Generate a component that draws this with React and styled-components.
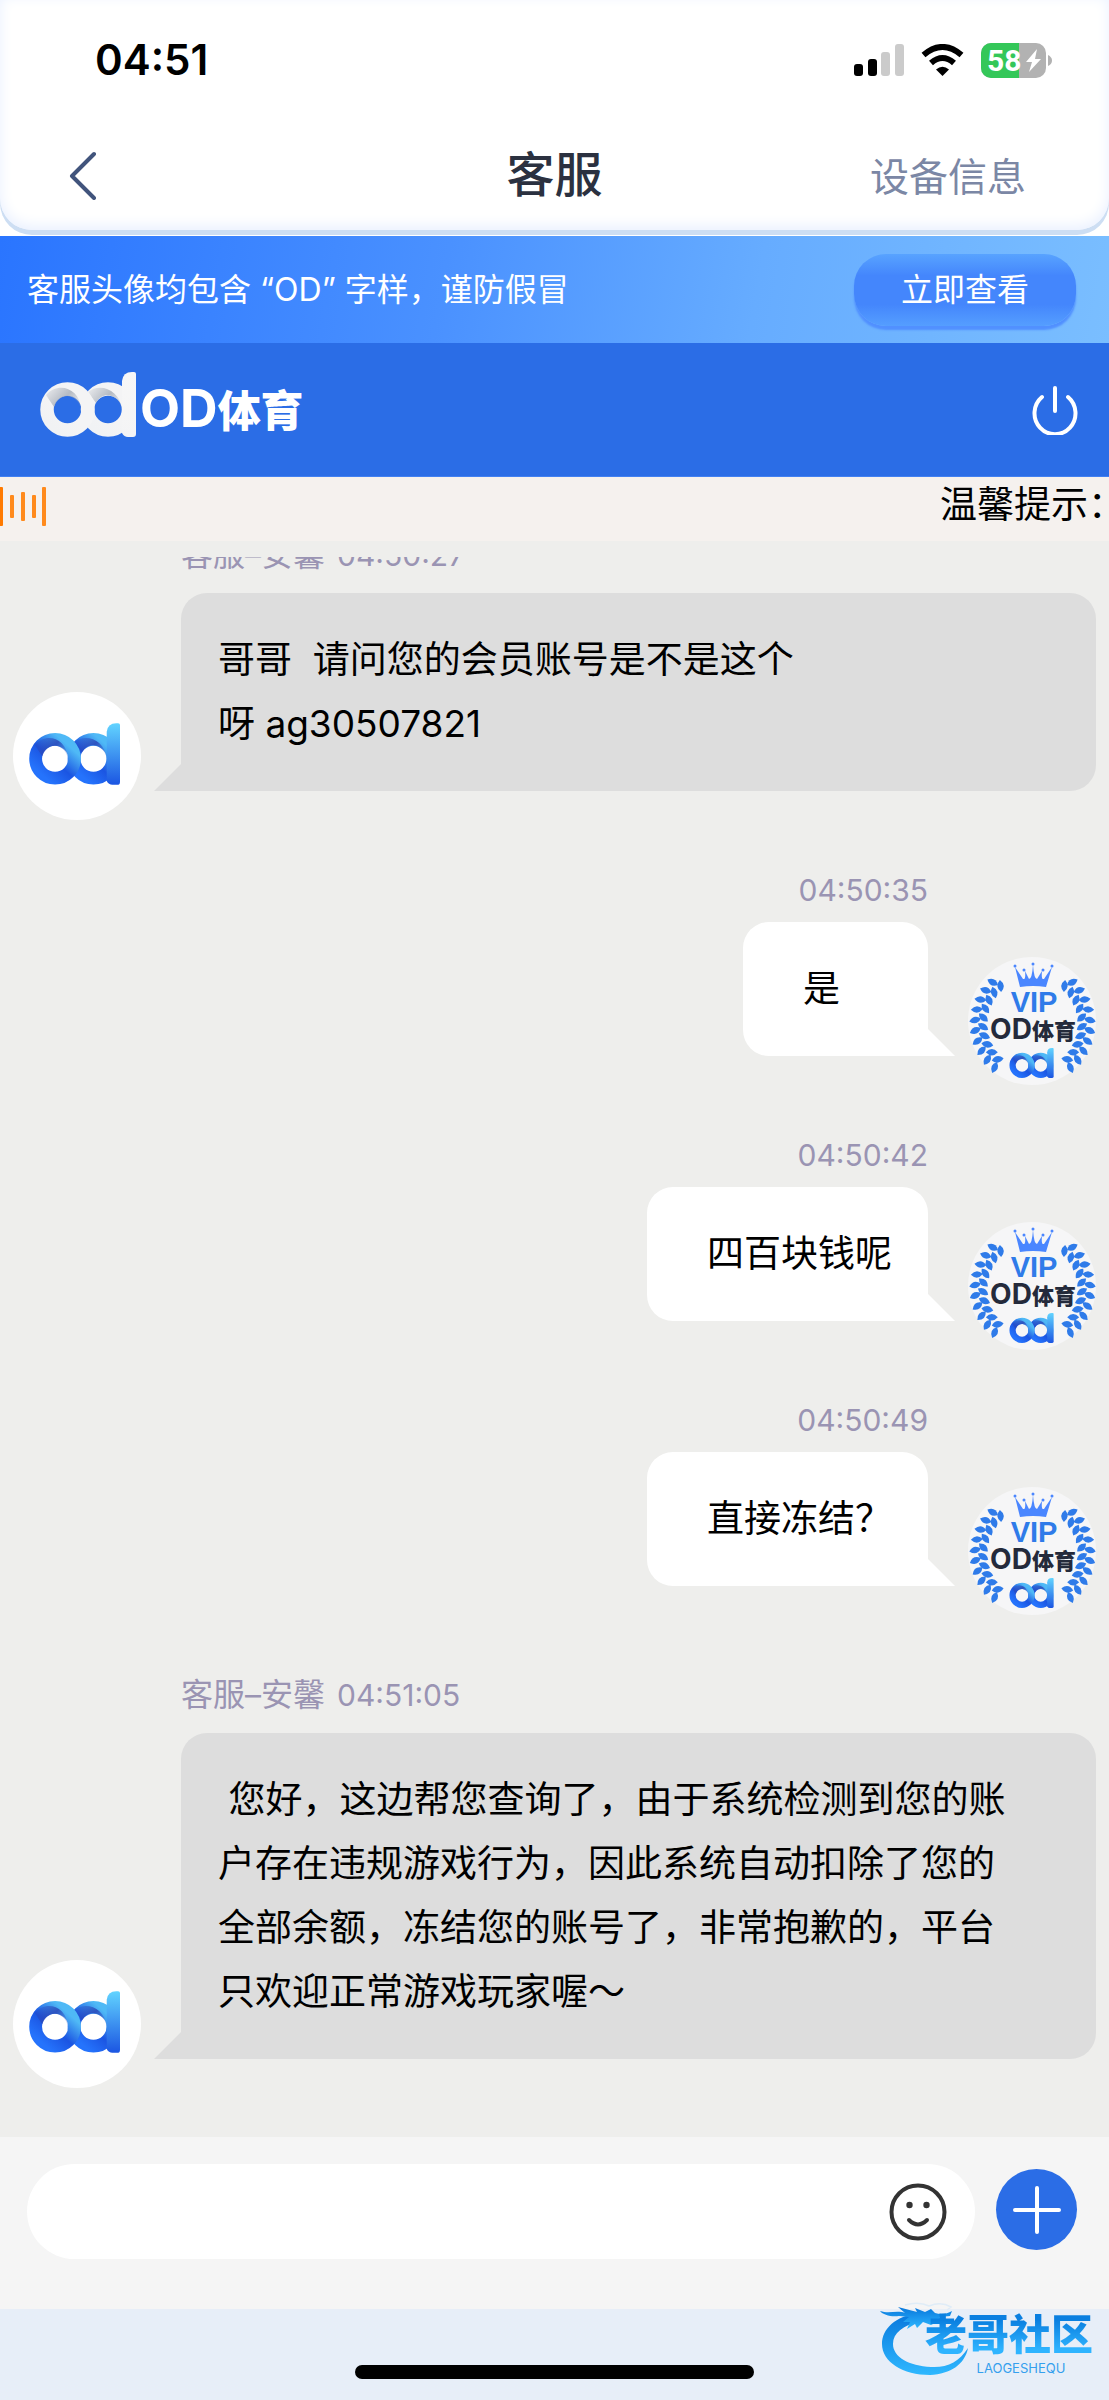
import React from "react";
import styled, { createGlobalStyle } from "styled-components";

const GlobalStyle = createGlobalStyle`
  * { box-sizing: border-box; }
  body {
    margin: 0;
    background: #fff;
    font-family: Inter, "Noto Sans CJK SC", sans-serif;
    color: #000;
  }
  button, input { font: inherit; }
  h1, h2, p { margin: 0; }
`;

const Screen = styled.div`
  display: flex;
  flex-direction: column;
  height: 100vh;
`;

const TopCard = styled.header`
  margin-bottom: 6px;
  background: #fff;
  border-radius: 0 0 32px 32px;
  box-shadow: 0 5px 0 #cddef3, inset 0 -4px 14px #e9f0ff;
`;

const StatusBar = styled.div`
  display: flex;
  align-items: center;
  justify-content: space-between;
  height: 120px;
  padding: 0 57px 0 95px;
`;

const Clock = styled.time`
  font-size: 42px;
  font-weight: 600;
  line-height: 48px;
`;

const StatusIcons = styled.div`
  display: flex;
  align-items: center;
  gap: 17px;
`;

const NavBar = styled.nav`
  display: grid;
  grid-template-columns: 1fr auto 1fr;
  align-items: center;
  height: 110px;
  padding: 0 68px;
`;

const PlainButton = styled.button`
  display: flex;
  padding: 0;
  border: 0;
  background: none;
  cursor: pointer;
`;

const Title = styled.h1`
  font-size: 48px;
  font-weight: 500;
  line-height: 64px;
  color: #2b3140;
`;

const DeviceLink = styled.a`
  justify-self: end;
  padding: 4px 15px 0 0;
  font-size: 39px;
  line-height: 56px;
  color: #7b87a5;
  text-decoration: none;
`;

const Banner = styled.section`
  display: flex;
  align-items: center;
  justify-content: space-between;
  height: 107px;
  padding: 0 33px 0 27px;
  background: linear-gradient(100deg, #2a75ff 0%, #4a91ff 40%, #66acff 68%, #7abeff 100%);
  color: #fff;
`;

const BannerText = styled.p`
  font-size: 32px;
  line-height: 48px;
`;

const BannerButton = styled.button`
  width: 222px;
  height: 72px;
  padding: 0;
  border: 0;
  border-radius: 32px;
  background: linear-gradient(#58a3ff 0%, #4486fc 30%, #4486fc 70%, #559eff 100%);
  box-shadow: 0 4px 2px #5190ff;
  color: #fff;
  font-size: 32px;
  line-height: 48px;
  cursor: pointer;
`;

const BrandBar = styled.section`
  display: flex;
  align-items: center;
  justify-content: space-between;
  height: 134px;
  padding: 0 30px 0 40px;
  background: #2b6de6;
  border-bottom: 1px solid #4180f2;
`;

const Brand = styled.h2`
  display: flex;
  align-items: flex-start;
  gap: 4px;
  color: #fff;
`;

const BrandLatin = styled.span`
  font-size: 52px;
  font-weight: 700;
  line-height: 74px;
`;

const BrandHan = styled.span`
  font-size: 43px;
  font-weight: 900;
  line-height: 74px;
`;

const BrandName = styled.span`
  display: flex;
  align-items: baseline;
`;

const Notice = styled.section`
  display: flex;
  justify-content: space-between;
  height: 64px;
  overflow: hidden;
  background: #f5f1ee;
`;

const NoticeText = styled.p`
  flex: none;
  margin-right: -16px;
  font-size: 37px;
  line-height: 56px;
`;

const NoticeIcon = styled.svg`
  margin-top: 10px;
`;

const ChatPane = styled.main`
  flex: 1;
  min-height: 0;
  display: flex;
  flex-direction: column;
  padding-top: 16px;
  background: #eeeeec;
`;

const Messages = styled.div`
  flex: 1;
  min-height: 0;
  display: flex;
  flex-direction: column;
  justify-content: flex-end;
  gap: 48px;
  padding: 0 13px 49px;
  overflow: hidden;
`;

const Row = styled.article`
  flex: none;
  display: flex;
  flex-direction: ${(p) => (p.$mine ? "row-reverse" : "row")};
  align-items: flex-end;
  gap: 40px;
`;

const Avatar = styled.div`
  flex: none;
  display: flex;
  align-items: center;
  justify-content: center;
  width: 128px;
  height: 128px;
  padding: ${(p) => (p.$mine ? "0" : "0 5px 5px 0")};
  border-radius: 50%;
  background: ${(p) => (p.$mine ? "#f6f6f7" : "#fff")};
`;

const Body = styled.div`
  flex: ${(p) => (p.$mine ? "none" : "1")};
  display: flex;
  flex-direction: column;
  align-items: ${(p) => (p.$mine ? "flex-end" : "stretch")};
  padding-bottom: 29px;
`;

const Meta = styled.div`
  display: flex;
  align-items: baseline;
  gap: 12px;
  padding: ${(p) => (p.$mine ? "0 0 10px" : "10px 0 16px")};
  font-size: 32px;
  line-height: 44px;
  color: #9a94b3;
`;

const MetaTime = styled.time`
  font-size: 30px;
`;

const Bubble = styled.div`
  position: relative;
  min-width: 185px;
  padding: ${(p) => (p.$mine ? "35px 36px 35px 60px" : "35px 66px 35px 37px")};
  border-radius: ${(p) => (p.$mine ? "26px 26px 0 26px" : "26px 26px 26px 0")};
  background: ${(p) => (p.$mine ? "#fff" : "#ddd")};
  font-size: 37px;
  line-height: 64px;

  &::after {
    content: "";
    position: absolute;
    bottom: 0;
    ${(p) => (p.$mine ? "left: 100%;" : "right: 100%;")}
    width: 27px;
    height: 27px;
    background: inherit;
    clip-path: ${(p) =>
      p.$mine ? "polygon(0 0, 100% 100%, 0 100%)" : "polygon(100% 0, 100% 100%, 0 100%)"};
  }
`;

const Composer = styled.form`
  display: flex;
  align-items: flex-start;
  gap: 21px;
  height: 172px;
  padding: 27px 32px 0 27px;
  background: #f5f5f5;
`;

const InputPill = styled.div`
  flex: 1;
  display: flex;
  align-items: center;
  gap: 20px;
  height: 95px;
  padding: 0 28px 0 40px;
  border-radius: 48px;
  background: #fff;
`;

const TextInput = styled.input`
  flex: 1;
  min-width: 0;
  height: 64px;
  padding: 0;
  border: 0;
  outline: none;
  background: transparent;
  font-size: 37px;
`;

const PlusButton = styled(PlainButton)`
  align-items: center;
  justify-content: center;
  width: 81px;
  height: 81px;
  margin-top: 5px;
  border-radius: 50%;
  background: #2b6de6;
`;

const HomeArea = styled.footer`
  position: relative;
  display: flex;
  align-items: flex-end;
  justify-content: center;
  height: 91px;
  padding-bottom: 21px;
  background: #e7eef8;
`;

const HomeIndicator = styled.div`
  width: 36%;
  height: 14px;
  border-radius: 7px;
  background: #000;
`;

const Watermark = styled.div`
  position: absolute;
  right: 16px;
  bottom: 22px;
  display: flex;
  gap: 4px;
`;

const WatermarkWords = styled.div`
  display: flex;
  flex-direction: column;
  align-items: center;
  margin: 8px 0 0 -48px;
`;

const WatermarkName = styled.span`
  font-size: 42px;
  font-weight: 900;
  line-height: 50px;
  color: transparent;
  background: linear-gradient(#0a7fe0 20%, #2fb4ff 80%);
  background-clip: text;
`;

const WatermarkLatin = styled.span`
  font-size: 13px;
  line-height: 16px;
  padding-left: 24px;
  color: #35a0ee;
`;

function OdMark({ id, width, height, light }) {
  const c = light
    ? { base: "#f1f2f4", mid: "#f4f4f5", far: "#f4f4f5", dark: "#aab1bb", stem: "#f7f7f7" }
    : { base: "#2573fc", mid: "#1b55e2", far: "#4fb9f6", dark: "#2a47b8", stem: "#62d4ff" };
  return (
    <svg width={width} height={height} viewBox="0 0 96 65" aria-hidden="true">
      <defs>
        <linearGradient id={`${id}-o`} x1="0.15" y1="0.9" x2="0.85" y2="0.1">
          <stop offset="0" stopColor={c.base} />
          <stop offset="0.45" stopColor={c.mid} />
          <stop offset="0.95" stopColor={c.far} />
        </linearGradient>
        <linearGradient id={`${id}-s`} x1="0" y1="0" x2="0" y2="1">
          <stop offset="0" stopColor={c.stem} />
          <stop offset="1" stopColor={c.mid} />
        </linearGradient>
        <linearGradient id={`${id}-d`} x1="0" y1="0" x2="1" y2="0.6">
          <stop offset="0" stopColor={c.dark} stopOpacity="0.1" />
          <stop offset="0.6" stopColor={c.dark} stopOpacity="0.85" />
          <stop offset="1" stopColor={c.dark} stopOpacity="0.2" />
        </linearGradient>
      </defs>
      <circle cx="68" cy="37.500" r="20.500" fill="none" stroke={`url(#${id}-o)`} strokeWidth="13.500" />
      <path d="M48 20 C60 10 80 18 82 37 C79 22 62 18 56 31 Z" fill={`url(#${id}-d)`} />
      <path d="M82 9 Q83 0 92 0 H94 Q96 0 96 2 V62 Q96 65 93 65 H88 Q84 65 82 61 Z" fill={`url(#${id}-s)`} />
      <circle cx="27.500" cy="37.500" r="20.500" fill="none" stroke={`url(#${id}-o)`} strokeWidth="13.500" />
      <path d="M6 23 C18 9 40 16 41 37 C38 22 20 18 14 35 Z" fill={`url(#${id}-d)`} />
    </svg>
  );
}

const leaves = Array.from({ length: 10 }, (_, i) => {
  const deg = 134 + i * 10.5;
  const a = (deg * Math.PI) / 180;
  return {
    key: i,
    heading: 90 - deg,
    outer: [65 + 58 * Math.cos(a), 67 - 58 * Math.sin(a)],
    inner: [65 + 50 * Math.cos(a - 0.06), 67 - 50 * Math.sin(a - 0.06)],
  };
});

function LaurelHalf() {
  return leaves.map(({ key, heading, outer, inner }) => (
    <g key={key} fill="#2f7be9">
      <path
        d="M-6 0 Q0 -6.500 6 0 Q0 6.500 -6 0 Z"
        transform={`translate(${outer[0]} ${outer[1]}) rotate(${heading + 72})`}
      />
      <path
        d="M-6 0 Q0 -6.500 6 0 Q0 6.500 -6 0 Z"
        transform={`translate(${inner[0]} ${inner[1]}) rotate(${heading - 52})`}
      />
    </g>
  ));
}

function VipBadge({ id }) {
  return (
    <svg width="128" height="128" viewBox="0 0 128 128" role="img" aria-label="VIP OD体育">
      <LaurelHalf />
      <g transform="translate(129 0) scale(-1 1)">
        <LaurelHalf />
      </g>
      <g fill="#4a86ff">
        <path d="M52 30 L47 10 L55 22 Q58 23 57 14 L61 22 Q64 22 65 8 Q66 22 69 22 L74 14 Q73 23 76 22 L84 10 L78 30 Q65 28 52 30 Z" />
        <circle cx="47" cy="9" r="1.500" />
        <circle cx="56" cy="13" r="1.500" />
        <circle cx="65" cy="7" r="1.500" />
        <circle cx="75" cy="13" r="1.500" />
        <circle cx="84" cy="9" r="1.500" />
      </g>
      <text x="66" y="55" textAnchor="middle" fontSize="29" fontWeight="800" fill="#2f7be9" fontFamily="'Liberation Sans', sans-serif">
        VIP
      </text>
      <text x="65" y="82" textAnchor="middle" fill="#242a3b" fontFamily="Inter, 'Noto Sans CJK SC', sans-serif">
        <tspan fontSize="28" fontWeight="700">OD</tspan>
        <tspan fontSize="22" fontWeight="900">体育</tspan>
      </text>
      <g transform="translate(41 91)">
        <OdMark id={id} width="45" height="30" />
      </g>
    </svg>
  );
}

function StatusGlyphs() {
  return (
    <StatusIcons>
      <svg width="50" height="32" viewBox="0 0 50 32" aria-label="信号">
        <rect x="0" y="20" width="9" height="12" rx="3" />
        <rect x="14" y="15" width="9" height="17" rx="3" />
        <rect x="27" y="8" width="9" height="24" rx="3" fill="#cbcbcb" />
        <rect x="41" y="0" width="9" height="32" rx="3" fill="#cbcbcb" />
      </svg>
      <svg width="43" height="32" viewBox="0 0 43 32" aria-label="Wi-Fi">
        <g fill="none" stroke="#000" strokeWidth="6">
          <path d="M2.500 11 Q21.500 -5 40.500 11" />
          <path d="M10 19 Q21.500 9 33 19" />
        </g>
        <path d="M15 25.500 Q21.500 20 28 25.500 L21.500 32 Z" />
      </svg>
      <svg width="71" height="35" viewBox="0 0 71 35" role="img" aria-label="电量 58%">
        <clipPath id="battery-shell">
          <rect width="65" height="35" rx="10" />
        </clipPath>
        <g clipPath="url(#battery-shell)">
          <rect width="65" height="35" fill="#b2b2b2" />
          <rect width="38" height="35" fill="#34c759" />
        </g>
        <path d="M67 12 Q71 14 71 17.500 Q71 21 67 23 Z" fill="#b2b2b2" />
        <text x="6" y="28" fontSize="30" fontWeight="700" fill="#fff" fontFamily="Roboto, sans-serif">
          58
        </text>
        <path d="M56 6 L45 19 H51 L48 29 L60 16 H54 Z" fill="#fff" />
      </svg>
    </StatusIcons>
  );
}

function Dragon() {
  return (
    <svg width="92" height="76" viewBox="0 0 92 76" aria-hidden="true">
      <defs>
        <linearGradient id="dragon" x1="0" y1="0" x2="0" y2="1">
          <stop offset="0" stopColor="#0877dc" />
          <stop offset="1" stopColor="#2fb8ff" />
        </linearGradient>
      </defs>
      <g fill="url(#dragon)">
        <path d="M42 11 C18 14 5 27 5 42 C5 60 26 73 53 73 C74 72 88 62 91 46 C82 60 70 66 54 65 C32 64 16 55 16 42 C16 31 26 23 44 19 Z" />
        <path d="M3 9 C12 12 20 8 28 11 L21 5 L40 10 L38 6 L48 10 L54 7 L58 11 C64 13 70 12 75 9 L73 14 L62 15 L73 19 L71 22 L60 20 L54 23 L46 20 L40 26 L38 22 L30 27 L33 20 L26 20 L32 15 L22 14 C14 15 6 13 3 9 Z" />
      </g>
      <path d="M28 3 Q42 -1 52 4 Q64 -1 74 5 L70 8" fill="none" stroke="#dfecf7" strokeWidth="1.500" />
    </svg>
  );
}

const messages = [
  { from: "客服–安馨", time: "04:50:27", text: "哥哥\u00a0\u00a0请问您的会员账号是不是这个呀\u00a0ag30507821" },
  { mine: true, time: "04:50:35", text: "是" },
  { mine: true, time: "04:50:42", text: "四百块钱呢" },
  { mine: true, time: "04:50:49", text: "直接冻结？" },
  {
    from: "客服–安馨",
    time: "04:51:05",
    text: "\u00a0您好，这边帮您查询了，由于系统检测到您的账户存在违规游戏行为，因此系统自动扣除了您的全部余额，冻结您的账号了，非常抱歉的，平台只欢迎正常游戏玩家喔～",
  },
];

function Message({ from, time, text, mine, id }) {
  return (
    <Row $mine={mine}>
      <Avatar $mine={mine}>
        {mine ? <VipBadge id={id} /> : <OdMark id={id} width="91" height="62" />}
      </Avatar>
      <Body $mine={mine}>
        <Meta $mine={mine}>
          {from && <span>{from}</span>}
          <MetaTime>{time}</MetaTime>
        </Meta>
        <Bubble $mine={mine}>{text}</Bubble>
      </Body>
    </Row>
  );
}

export default function App() {
  return (
    <Screen lang="zh-CN">
      <GlobalStyle />
      <TopCard>
        <StatusBar>
          <Clock>04:51</Clock>
          <StatusGlyphs />
        </StatusBar>
        <NavBar>
          <PlainButton type="button" aria-label="返回">
            <svg width="30" height="50" viewBox="0 0 30 50" fill="none" stroke="#41547c" strokeWidth="4" strokeLinecap="round" strokeLinejoin="round">
              <path d="M26 4 L4 26 L26 48" />
            </svg>
          </PlainButton>
          <Title>客服</Title>
          <DeviceLink href="#device">设备信息</DeviceLink>
        </NavBar>
      </TopCard>

      <Banner>
        <BannerText>客服头像均包含 “OD” 字样，谨防假冒</BannerText>
        <BannerButton type="button">立即查看</BannerButton>
      </Banner>

      <BrandBar>
        <Brand>
          <OdMark id="brand" width="96" height="65" light />
          <BrandName>
            <BrandLatin>OD</BrandLatin>
            <BrandHan>体育</BrandHan>
          </BrandName>
        </Brand>
        <PlainButton type="button" aria-label="退出">
          <svg width="48" height="50" viewBox="0 0 48 50" fill="none" stroke="#fff" strokeWidth="4" strokeLinecap="round">
            <path d="M24 3 V26" />
            <path d="M11 12 A20.500 21 0 1 0 37 12" />
          </svg>
        </PlainButton>
      </BrandBar>

      <Notice>
        <NoticeIcon width="48" height="40" viewBox="0 0 48 40" fill="#ff8a1c" aria-hidden="true">
          <rect x="-1" y="0" width="4" height="39" rx="1" fill="#ff7a00" />
          <rect x="10" y="8" width="4" height="23" rx="1" />
          <rect x="21" y="5" width="4" height="29" rx="1" />
          <rect x="32" y="8" width="4" height="23" rx="1" />
          <rect x="42" y="0" width="4" height="39" rx="1" />
        </NoticeIcon>
        <NoticeText>温馨提示：</NoticeText>
      </Notice>

      <ChatPane>
        <Messages>
          {messages.map((m, i) => (
            <Message key={m.time} id={`mark${i}`} {...m} />
          ))}
        </Messages>
      </ChatPane>

      <Composer onSubmit={(e) => e.preventDefault()}>
        <InputPill>
          <TextInput type="text" aria-label="输入消息" />
          <PlainButton type="button" aria-label="表情">
            <svg width="58" height="58" viewBox="0 0 58 58" fill="none" stroke="#333" strokeWidth="4" strokeLinecap="round">
              <circle cx="29" cy="29" r="26.500" />
              <path d="M20 37 Q29 46 38 37" />
              <g fill="#333" stroke="none">
                <circle cx="20.500" cy="22" r="3.200" />
                <circle cx="37.500" cy="22" r="3.200" />
              </g>
            </svg>
          </PlainButton>
        </InputPill>
        <PlusButton type="button" aria-label="更多">
          <svg width="48" height="48" viewBox="0 0 48 48" stroke="#fff" strokeWidth="4" strokeLinecap="round">
            <path d="M24 2 V46 M2 24 H46" />
          </svg>
        </PlusButton>
      </Composer>

      <HomeArea>
        <HomeIndicator />
        <Watermark>
          <Dragon />
          <WatermarkWords>
            <WatermarkName>老哥社区</WatermarkName>
            <WatermarkLatin>LAOGESHEQU</WatermarkLatin>
          </WatermarkWords>
        </Watermark>
      </HomeArea>
    </Screen>
  );
}
